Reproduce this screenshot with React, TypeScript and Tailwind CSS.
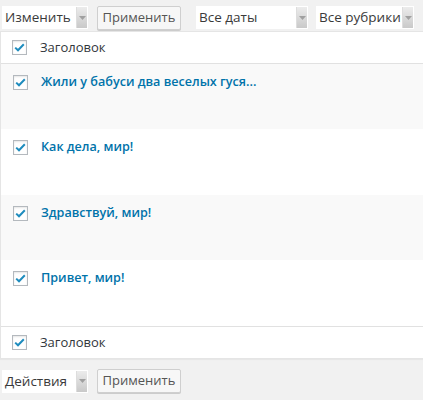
import React from "react";

const font = { fontFamily: '"Open Sans", "Noto Sans", sans-serif' };

function Arrow() {
  return (
    <div className="flex h-full w-[11px] items-center justify-center bg-gradient-to-b from-[#ececec] to-[#c9c9c9] border-l border-[#ddd]">
      <svg width="7" height="4" viewBox="0 0 7 4">
        <path d="M0 0 L7 0 L3.5 4 Z" fill="#a0a0a0" />
      </svg>
    </div>
  );
}

function Select({ label, w }: { label: string; w: string }) {
  return (
    <div className={`flex h-[23px] items-stretch bg-white ${w}`}>
      <div className="flex flex-1 items-center pl-[3px] text-[13.5px] text-[#3a3a3a] whitespace-nowrap">{label}</div>
      <div className="py-[1px] pr-[1px]"><Arrow /></div>
    </div>
  );
}

function Button() {
  return (
    <div className="flex h-[24px] w-[84px] items-center justify-center rounded-[2px] border border-[#cfcfcf] bg-[#f7f7f7] text-[13px] text-[#555] shadow-[0_1px_0_#ccc]">
      Применить
    </div>
  );
}

function Check() {
  return (
    <div className="flex h-[15px] w-[15px] shrink-0 items-center justify-center border border-[#b4b9be] bg-white shadow-[inset_0_1px_2px_rgba(0,0,0,0.1)]">
      <svg width="11" height="9" viewBox="0 0 11 9">
        <path d="M1.2 4.6 L4 7.3 L9.8 1.3" stroke="#1e8cbe" strokeWidth="2" fill="none" />
      </svg>
    </div>
  );
}

function Row({ title, gray, h }: { title: string; gray: boolean; h: string }) {
  return (
    <div className={`flex ${h} items-start gap-[13px] pl-[12px] pt-[11px] ${gray ? "bg-[#f9f9f9]" : "bg-white"}`}>
      <Check />
      <div className="text-[12.6px] font-semibold leading-[16px] text-[#0073aa] -mt-[1px]">{title}</div>
    </div>
  );
}

export default function App() {
  return (
    <div className="h-[400px] w-[423px] overflow-hidden bg-[#f1f1f1]" style={font}>
      <div className="flex items-center pt-[4px] pl-[2px] h-[31px]">
        <Select label="Изменить" w="w-[86px]" />
        <div className="ml-[9px]"><Button /></div>
        <div className="ml-[15px]"><Select label="Все даты" w="w-[112px]" /></div>
        <div className="ml-[8px]"><Select label="Все рубрики" w="w-[98px]" /></div>
      </div>
      <div className="bg-white border border-[#e5e5e5] shadow-[0_1px_1px_rgba(0,0,0,0.04)] w-[424px]">
        <div className="flex h-[32px] items-center gap-[13px] pl-[11px] border-b border-[#e1e1e1]">
          <Check />
          <div className="text-[13px] text-[#32373c]">Заголовок</div>
        </div>
        <Row title="Жили у бабуси два веселых гуся..." gray h="h-[65px]" />
        <Row title="Как дела, мир!" gray={false} h="h-[66px]" />
        <Row title="Здравствуй, мир!" gray h="h-[65px]" />
        <Row title="Привет, мир!" gray={false} h="h-[66px]" />
        <div className="flex h-[32px] items-center gap-[13px] pl-[11px] border-t border-[#e1e1e1]">
          <Check />
          <div className="text-[13px] text-[#32373c]">Заголовок</div>
        </div>
      </div>
      <div className="flex items-center pt-[10px] pl-[2px]">
        <Select label="Действия" w="w-[86px]" />
        <div className="ml-[9px]"><Button /></div>
      </div>
    </div>
  );
}
